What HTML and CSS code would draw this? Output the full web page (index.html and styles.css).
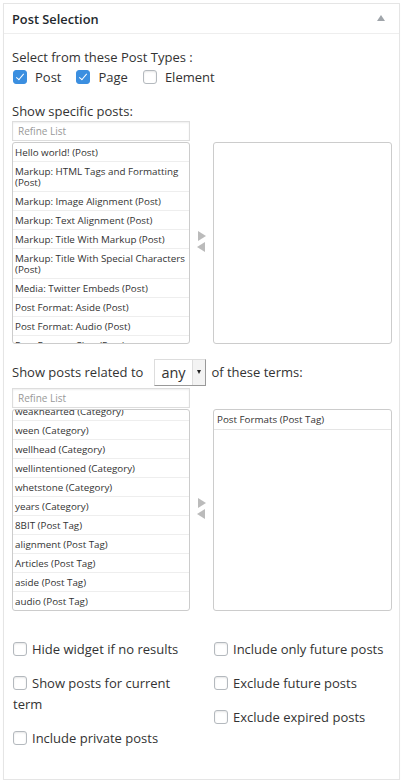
FILE: index.html
```html
<!DOCTYPE html>
<html>
<head>
<meta charset="utf-8">
<link rel="stylesheet" href="styles.css">
</head>
<body>
<div class="postbox">
  <div class="hndle">
    <h2 class="title">Post Selection</h2>
    <span class="toggle"></span>
  </div>
  <div class="inside">
    <div class="label">Select from these Post Types :</div>
    <div class="types">
      <label class="cb-item"><span class="cb checked"></span>Post</label>
      <label class="cb-item"><span class="cb checked"></span>Page</label>
      <label class="cb-item"><span class="cb"></span>Element</label>
    </div>

    <div class="label label-posts">Show specific posts:</div>
    <div class="picker">
      <div class="refine">Refine List</div>
      <div class="list">
        <div class="item">Hello world! (Post)</div>
        <div class="item">Markup: HTML Tags and Formatting (Post)</div>
        <div class="item">Markup: Image Alignment (Post)</div>
        <div class="item">Markup: Text Alignment (Post)</div>
        <div class="item">Markup: Title With Markup (Post)</div>
        <div class="item">Markup: Title With Special Characters (Post)</div>
        <div class="item">Media: Twitter Embeds (Post)</div>
        <div class="item">Post Format: Aside (Post)</div>
        <div class="item">Post Format: Audio (Post)</div>
        <div class="item">Post Format: Chat (Post)</div>
        <div class="item">Post Format: Gallery (Post)</div>
      </div>
      <div class="arrows">
        <span class="arr right"></span>
        <span class="arr left"></span>
      </div>
      <div class="chosen"></div>
    </div>

    <div class="related">
      <span>Show posts related to</span>
      <span class="select"><span class="sel-val">any</span><span class="sel-btn"></span></span>
      <span>of these terms:</span>
    </div>
    <div class="picker picker-terms">
      <div class="refine">Refine List</div>
      <div class="list">
        <div class="scroller">
          <div class="item">weakhearted (Category)</div>
          <div class="item">ween (Category)</div>
          <div class="item">wellhead (Category)</div>
          <div class="item">wellintentioned (Category)</div>
          <div class="item">whetstone (Category)</div>
          <div class="item">years (Category)</div>
          <div class="item">8BIT (Post Tag)</div>
          <div class="item">alignment (Post Tag)</div>
          <div class="item">Articles (Post Tag)</div>
          <div class="item">aside (Post Tag)</div>
          <div class="item">audio (Post Tag)</div>
        </div>
      </div>
      <div class="arrows">
        <span class="arr right"></span>
        <span class="arr left"></span>
      </div>
      <div class="chosen">
        <div class="item">Post Formats (Post Tag)</div>
      </div>
    </div>

    <div class="options">
      <div class="opt-col opt-left">
        <label class="opt"><span class="cb"></span>Hide widget if no results</label>
        <label class="opt"><span class="cb"></span>Show posts for current term</label>
        <label class="opt"><span class="cb"></span>Include private posts</label>
      </div>
      <div class="opt-col">
        <label class="opt"><span class="cb"></span>Include only future posts</label>
        <label class="opt"><span class="cb"></span>Exclude future posts</label>
        <label class="opt"><span class="cb"></span>Exclude expired posts</label>
      </div>
    </div>
  </div>
</div>
</body>
</html>
```
FILE: styles.css
```css
* { box-sizing: border-box; }
html, body { margin: 0; padding: 0; background: #fff; }
body {
  font-family: "Open Sans", "Liberation Sans", sans-serif;
  color: #444;
  font-size: 13px;
}
.postbox {
  margin: 3px 3px 0 3px;
  width: 397px;
  height: 777px;
  border: 1px solid #e5e5e5;
  box-shadow: 0 1px 1px rgba(0,0,0,0.04);
  background: #fff;
}
.hndle {
  height: 30px;
  border-bottom: 1px solid #eee;
  display: flex;
  align-items: center;
  justify-content: space-between;
  padding: 0 14px 0 8px;
}
.title {
  margin: 0;
  font-size: 12.8px;
  font-weight: 600;
  color: #23282d;
}
.toggle {
  width: 0; height: 0;
  border-left: 4px solid transparent;
  border-right: 4px solid transparent;
  border-bottom: 6px solid #a0a5aa;
  margin-top: -2px;
}
.inside {
  padding: 13px 8px 0 8px;
}
.label {
  font-size: 13px;
  line-height: 20px;
  color: #333;
}
.types {
  display: flex;
  gap: 15px;
  line-height: 20px;
  margin-left: 1px;
}
.cb-item {
  display: flex;
  align-items: center;
  gap: 8px;
  font-size: 13px;
  color: #333;
}
.cb {
  display: inline-block;
  width: 14px;
  height: 14px;
  border: 1px solid #b4b9be;
  border-radius: 3px;
  background: #fff;
  box-shadow: inset 0 1px 2px rgba(0,0,0,0.1);
  flex: none;
  position: relative;
}
.cb.checked {
  background: #3b8fe0;
  border-color: #3b8fe0;
  box-shadow: none;
}
.cb.checked::after {
  content: "";
  position: absolute;
  left: 4px;
  top: 1px;
  width: 3px;
  height: 7px;
  border: solid #fff;
  border-width: 0 1.5px 1.5px 0;
  transform: rotate(40deg);
}
.label-posts { margin-top: 14px; }
.picker {
  display: grid;
  grid-template-columns: 178px 23px 179px;
  grid-template-rows: 21px 202px;
}
.refine {
  grid-column: 1;
  grid-row: 1;
  height: 20px;
  border: 1px solid #ddd;
  font-size: 10px;
  line-height: 18px;
  padding-left: 5px;
  color: #999;
  box-shadow: inset 0 1px 2px rgba(0,0,0,0.07);
}
.list {
  grid-column: 1;
  grid-row: 2;
  border: 1px solid #ccc;
  border-radius: 3px;
  overflow: hidden;
}
.scroller { margin-top: -8px; }
.item {
  font-size: 9.8px;
  line-height: 11px;
  padding: 4px 2px 3px 2px;
  border-bottom: 1px solid #eee;
  color: #333;
}
.arrows {
  grid-column: 2;
  grid-row: 2;
  display: flex;
  flex-direction: column;
  align-items: center;
  justify-content: center;
  gap: 1px;
  padding-bottom: 4px;
}
.arr {
  width: 0; height: 0;
  border-top: 5.5px solid transparent;
  border-bottom: 5.5px solid transparent;
}
.arr.right { border-left: 8px solid #bbb; margin-left: 1px; }
.arr.left { border-right: 8px solid #bbb; margin-left: -1px; }
.chosen {
  grid-column: 3;
  grid-row: 2;
  border: 1px solid #ccc;
  border-radius: 3px;
  overflow: hidden;
}
.chosen .item { padding: 4px 3px 4px 3px; border-bottom-color: #e5e5e5; }
.related {
  display: flex;
  align-items: center;
  margin-top: 14px;
  font-size: 13px;
  color: #333;
  height: 28px;
}
.select {
  display: inline-flex;
  height: 27px;
  width: 52px;
  border: 1px solid #ddd;
  border-right-color: #999;
  border-bottom-color: #999;
  background: #fff;
  margin: 0 5px 0 11px;
}
.sel-val {
  flex: 1;
  font-size: 14.5px;
  line-height: 25px;
  padding-left: 6px;
  color: #333;
}
.sel-btn {
  width: 13px;
  border-left: 1px solid #ddd;
  background: #f3f3f3;
  display: flex;
  align-items: center;
  justify-content: center;
}
.sel-btn::after {
  content: "";
  width: 0; height: 0;
  border-left: 2.5px solid transparent;
  border-right: 2.5px solid transparent;
  border-top: 4px solid #222;
}
.picker-terms { margin-top: 2px; }
.options {
  display: grid;
  grid-template-columns: 201px 1fr;
  margin-top: 28px;
}
.opt-col {
  display: flex;
  flex-direction: column;
  gap: 13px;
}
.opt {
  display: block;
  font-size: 13px;
  line-height: 21px;
  color: #333;
  padding-left: 1px;
}
.opt-left .opt { padding-right: 20px; }
.opt .cb {
  vertical-align: -2px;
  margin-right: 5px;
}
```
